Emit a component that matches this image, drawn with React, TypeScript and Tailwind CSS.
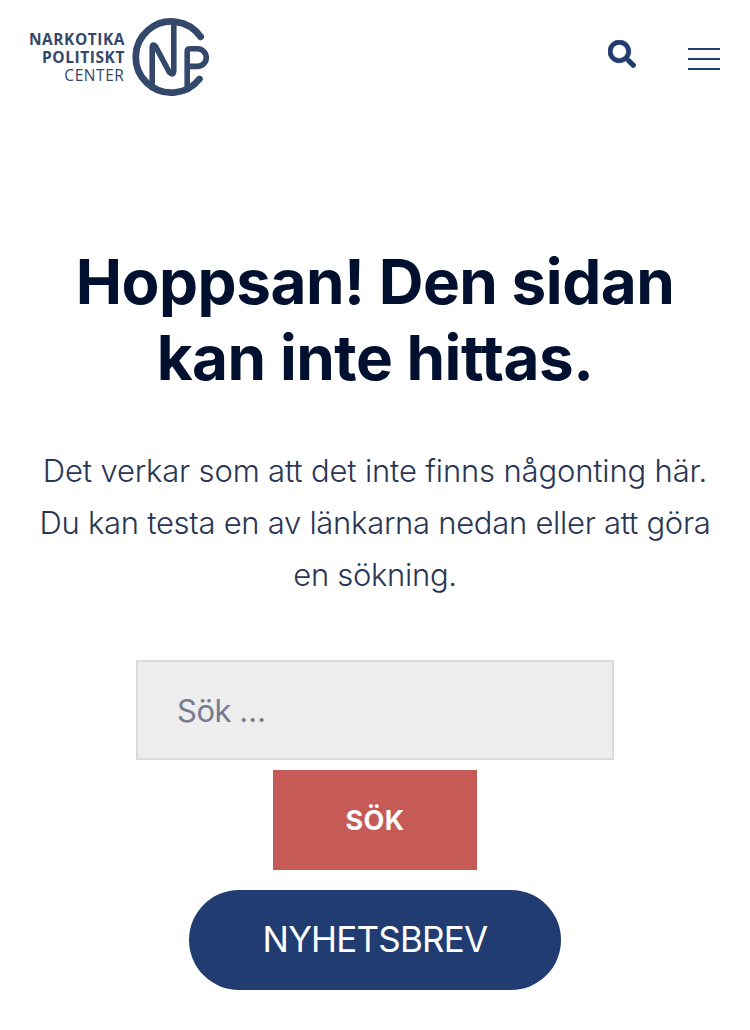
import React, { useState } from "react";
import { FaSearch } from "react-icons/fa";

const Logo = () => (
  <svg
    viewBox="0 0 184 84"
    className="h-[84px] w-[184px]"
    fill="#33486a"
    fontFamily='"Open Sans", "Noto Sans", sans-serif'
    fontSize="16.4"
    letterSpacing="0.6"
    role="img"
    aria-label="Narkotikapolitiskt Center"
  >
    <text x="1" y="29.7" fontWeight="700" textLength="96" lengthAdjust="spacingAndGlyphs">
      NARKOTIKA
    </text>
    <text x="14" y="48" fontWeight="700" textLength="83" lengthAdjust="spacingAndGlyphs">
      POLITISKT
    </text>
    <text x="36.3" y="66.3" fontWeight="400" textLength="60.2" lengthAdjust="spacingAndGlyphs">
      CENTER
    </text>
    <g
      fill="none"
      stroke="#33486a"
      strokeWidth="6.8"
      strokeLinecap="round"
      strokeLinejoin="round"
    >
      <path d="M172.6 21.8A35.6 35.6 0 1 0 171.4 64" />
      <path d="M124.2 69V33Q124.2 27.8 127.6 31.5L141.2 57Q145.8 61.5 145.8 55V8" strokeWidth="5.6" />
      <path d="M159.2 74V36.5Q159.2 33.8 162 33.8H169.5A8.8 8.8 0 0 1 169.5 51.4H160.5" strokeWidth="5.6" />
    </g>
  </svg>
);

const App = () => {
  const [query, setQuery] = useState("");

  // Handle search submission
  const handleSubmit = (e: React.FormEvent) => {
    e.preventDefault();
  };

  return (
    <div className="min-h-[1030px] bg-white font-['Inter',sans-serif] text-[#00102e]">
      <header className="flex h-[114px] items-start justify-between pt-[15px] pr-[30px] pl-7">
        <a href="#" className="block">
          <Logo />
        </a>
        <div className="flex items-start">
          <button type="button" aria-label="Sök" className="mt-[25px] text-[#213c70]">
            <FaSearch className="h-7 w-7" stroke="currentColor" strokeWidth="12" />
          </button>
          <button
            type="button"
            aria-label="Meny"
            className="mt-[33px] ml-[52px] flex w-8 flex-col gap-2"
          >
            <span className="h-0.5 w-full bg-[#213c70]" />
            <span className="h-0.5 w-full bg-[#213c70]" />
            <span className="h-0.5 w-full bg-[#213c70]" />
          </button>
        </div>
      </header>

      <main className="flex flex-col items-center pt-[130px] text-center">
        <h1 className="text-[62px] leading-[76px] font-bold tracking-[-0.5px] whitespace-nowrap">
          Hoppsan! Den sidan
          <br />
          kan inte hittas.
        </h1>

        <p className="mt-[49px] text-[31px] leading-[52px] font-light whitespace-nowrap text-[#2a3653]">
          <span className="tracking-[-0.16px]">Det verkar som att det inte finns någonting här.</span>
          <br />
          <span className="tracking-[-0.28px]">Du kan testa en av länkarna nedan eller att göra</span>
          <br />
          <span className="tracking-[-0.3px]">en sökning.</span>
        </p>

        <form onSubmit={handleSubmit} className="mt-[59px] flex flex-col items-center">
          <input
            type="search"
            value={query}
            onChange={(e) => setQuery(e.target.value)}
            placeholder="Sök …"
            className="h-[100px] w-[478px] border-2 border-[#dadada] bg-[#ededed] px-[39px] text-[31px] tracking-[-0.5px] placeholder:text-[#777c8c]"
          />
          <button
            type="submit"
            className="mt-2.5 h-[100px] w-[204px] bg-[#c55a56] pt-[3px] text-[27px] font-bold tracking-[0.3px] text-white"
          >
            SÖK
          </button>
        </form>

        <a
          href="#"
          className="mt-5 flex h-[100px] w-[372px] items-center justify-center rounded-full bg-[#213c70] pb-px text-[35px] font-normal tracking-[-0.8px] text-white"
        >
          NYHETSBREV
        </a>
      </main>
    </div>
  );
};

export default App;
